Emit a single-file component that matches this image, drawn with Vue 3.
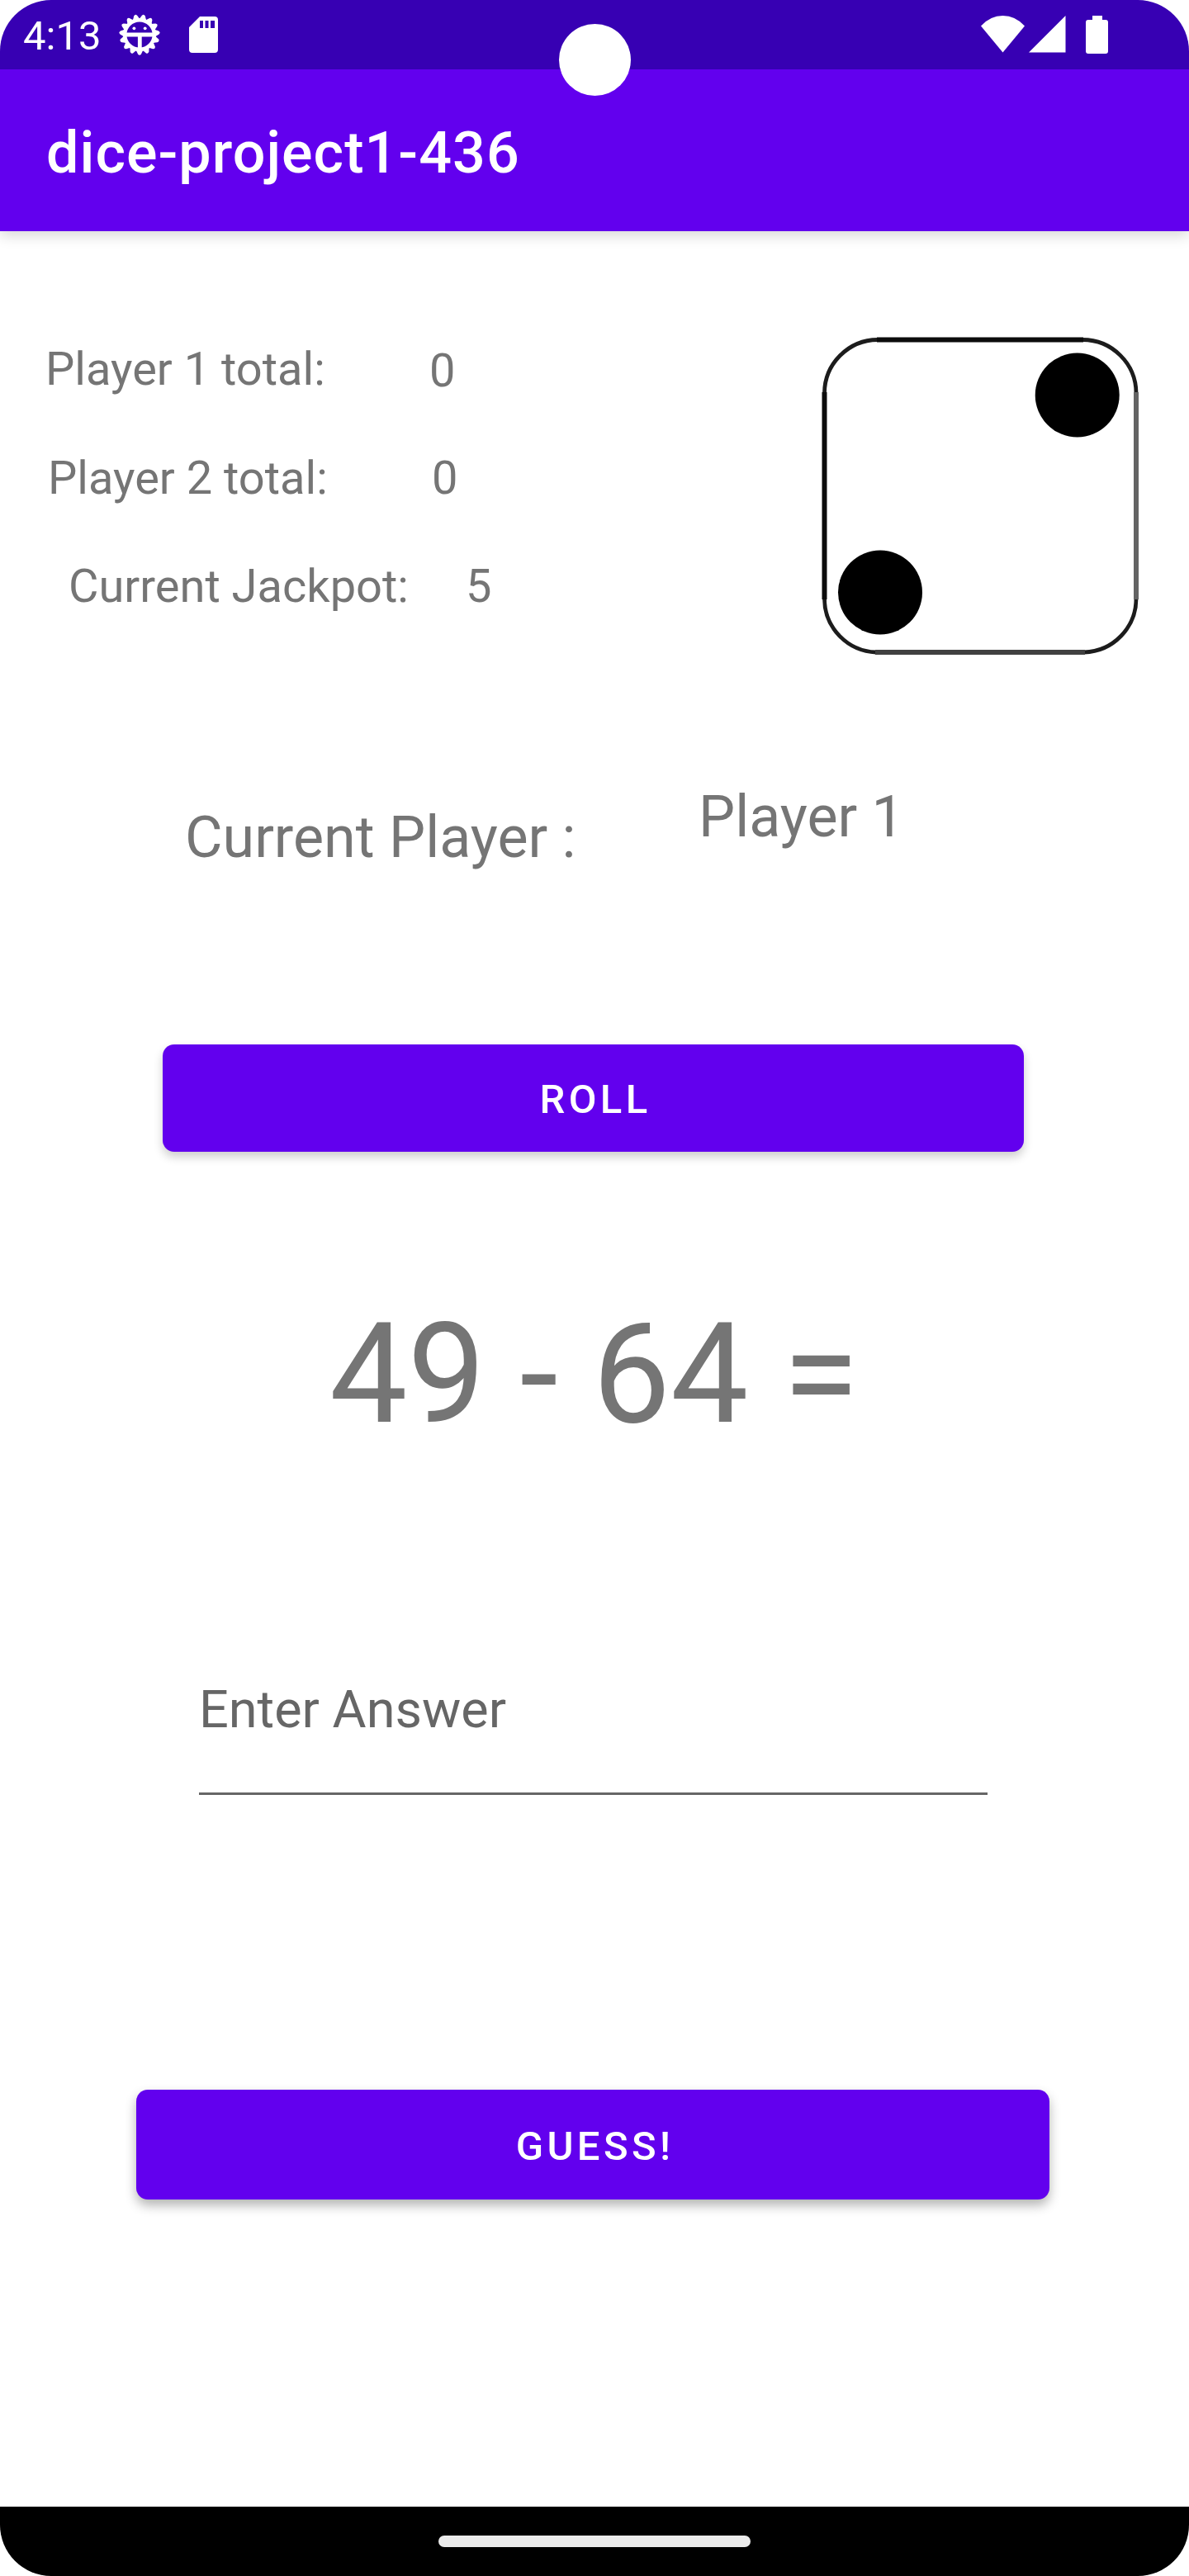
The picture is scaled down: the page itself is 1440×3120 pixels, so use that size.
<script setup>
import { ref } from 'vue'

const scores = ref([
  { id: 'p1', label: 'Player 1 total:', value: 0 },
  { id: 'p2', label: 'Player 2 total:', value: 0 },
  { id: 'jackpot', label: 'Current Jackpot:', value: 5 },
])
const currentPlayer = ref('Player 1')
const problem = ref('49 - 64 =')
const answer = ref('')

const teeth = Array.from({ length: 15 }, (_, i) => i * 24 + 12)
</script>

<template>
  <div class="phone">
    <header class="status-bar">
      <span class="clock">4:13</span>
      <svg class="debug-icon" viewBox="-25 -25 50 50">
        <g fill="#fff">
          <path
            v-for="angle in teeth"
            :key="angle"
            d="M-4.6 -18 L-2 -23.4 Q0 -26 2 -23.4 L4.6 -18 Z"
            :transform="`rotate(${angle})`"
          />
        </g>
        <circle r="17.8" fill="none" stroke="#fff" stroke-width="4.4" />
        <path d="M-17 0H17M0.3 0V17" fill="none" stroke="#fff" stroke-width="4.8" />
        <circle cx="-6.6" cy="-7.7" r="1.9" fill="#fff" />
        <circle cx="6.7" cy="-7.7" r="1.9" fill="#fff" />
      </svg>
      <svg class="sd-icon" viewBox="0 0 35 44">
        <path
          fill="#fff"
          fill-rule="evenodd"
          d="M13 0H31Q35 0 35 4V40Q35 44 31 44H4Q0 44 0 40V13ZM13 5V14H17V5ZM19.5 5V14H23.5V5ZM26 5V14H31V5Z"
        />
      </svg>
      <span class="spacer"></span>
      <svg class="wifi-icon" viewBox="0 0 53 45">
        <path fill="#fff" d="M0 12.4Q11.500 0 26.500 0T53 12.400L26.500 44.500Z" />
      </svg>
      <svg class="signal-icon" viewBox="0 0 45 45">
        <path fill="#fff" d="M0 44.500L44.500 0V44.500Z" />
      </svg>
      <svg class="battery-icon" viewBox="0 0 27 46">
        <path fill="#fff" d="M8 0H20V5H24Q27 5 27 8V43Q27 46 24 46H3Q0 46 0 43V8Q0 5 3 5H8Z" />
      </svg>
      <span class="camera"></span>
    </header>

    <div class="app-bar"><h1>dice-project1-436</h1></div>

    <main class="content">
      <section class="summary">
        <div class="scores">
          <div v-for="s in scores" :key="s.id" class="score" :class="s.id">
            <span class="label">{{ s.label }}</span>
            <span class="value">{{ s.value }}</span>
          </div>
        </div>
        <svg class="die" viewBox="0 0 384 386">
          <path d="M3.500 68A65 65 0 0 1 68 3.500M316 3.500A65 65 0 0 1 381 68M381 317A65 65 0 0 1 318 382M66 382A65 65 0 0 1 3.500 317" fill="none" stroke="#1c1c1c" stroke-width="4.800" />
          <path d="M67 3.500H317" stroke="#0c0c0c" stroke-width="6" />
          <path d="M3.500 67V318" stroke="#0c0c0c" stroke-width="6" />
          <path d="M65 382H319" stroke="#404040" stroke-width="6" />
          <path d="M381 67V318" stroke="#646464" stroke-width="6" />
          <circle cx="309.700" cy="70.500" r="51" />
          <circle cx="71" cy="309.500" r="51" />
        </svg>
      </section>

      <section class="turn">
        <span class="turn-label">Current Player :</span>
        <span class="turn-value">{{ currentPlayer }}</span>
      </section>

      <button class="btn roll">ROLL</button>
      <div class="problem">{{ problem }}</div>
      <input v-model="answer" class="answer" type="text" placeholder="Enter Answer" />
      <button class="btn guess">GUESS!</button>
    </main>

    <footer class="nav-bar"><span class="handle"></span></footer>
  </div>
</template>

<style>
body {
  margin: 0;
  background: #fff;
}
</style>

<style scoped>
.phone {
  width: 1440px;
  height: 3120px;
  display: flex;
  flex-direction: column;
  overflow: hidden;
  border-radius: 62px;
  background: #fff;
  color: #757575;
  font-family: Roboto, "Liberation Sans", sans-serif;
}
.status-bar {
  position: relative;
  z-index: 2;
  height: 84px;
  box-sizing: border-box;
  flex: none;
  display: flex;
  align-items: flex-start;
  padding: 0 98px 0 28px;
  background: #3700b3;
  color: #fff;
}
.clock {
  width: 116px;
  padding-top: 15px;
  font-size: 49px;
  line-height: 58px;
}
.debug-icon { width: 50px; height: 50px; margin-top: 17px; }
.sd-icon { width: 35px; height: 44px; margin: 20px 0 0 35px; }
.spacer { flex: 1; }
.wifi-icon { width: 53px; height: 45px; margin-top: 19px; }
.signal-icon { width: 45px; height: 45px; margin: 19px 0 0 5px; }
.battery-icon { width: 27px; height: 46px; margin: 19px 0 0 24px; }
.camera {
  position: absolute;
  left: 677px;
  top: 29px;
  width: 87px;
  height: 87px;
  border-radius: 50%;
  background: #fff;
}
.app-bar {
  position: relative;
  z-index: 1;
  height: 196px;
  flex: none;
  display: flex;
  align-items: center;
  padding-left: 56px;
  background: #6200ee;
  color: #fff;
  box-shadow: 0 5px 16px rgba(0, 0, 0, 0.16);
}
h1 {
  margin: 6px 0 0;
  font-size: 70px;
  line-height: 82px;
  font-weight: 500;
  letter-spacing: 1.05px;
}
.content {
  flex: 1;
  display: flex;
  flex-direction: column;
}
.summary {
  display: flex;
  justify-content: space-between;
  align-items: flex-start;
  padding: 128px 61px 0 55px;
}
.scores {
  display: flex;
  flex-direction: column;
  gap: 66px;
  padding-top: 6px;
}
.score {
  display: flex;
  font-size: 56px;
  line-height: 66px;
}
.label { width: 465px; white-space: nowrap; }
.p1 .value { margin: 2px 0 -2px; }
.p2 { margin-left: 3px; }
.jackpot { margin: -1px 0 0 28px; }
.jackpot .label { width: 481px; }
.die { width: 384px; height: 386px; }
.turn {
  display: flex;
  align-items: flex-start;
  padding-left: 224px;
  margin-top: 154px;
  font-size: 70px;
  line-height: 82px;
}
.turn-label { width: 622px; padding-top: 25px; }
.btn {
  border: 0;
  border-radius: 14px;
  padding: 0;
  background: #6200ee;
  color: #fff;
  font: 500 49px/58px Roboto, "Liberation Sans", sans-serif;
  letter-spacing: 4.375px;
}
.roll {
  width: 1043px;
  height: 130px;
  margin: 210px 0 0 197px;
  padding: 3px 0 0 5px;
  box-shadow: 0 6px 12px rgba(0, 0, 0, 0.2);
}
.problem {
  margin: 172px 0 0 399px;
  font-size: 168px;
  line-height: 196px;
  white-space: nowrap;
}
.answer {
  box-sizing: border-box;
  width: 955px;
  height: 174px;
  margin: 237px 0 0 241px;
  padding: 0 0 30px;
  border: 0;
  border-bottom: 3px solid #666;
  border-radius: 0;
  outline: none;
  background: transparent;
  color: #222;
  font: 63px/74px Roboto, "Liberation Sans", sans-serif;
}
.answer::placeholder { color: #666; opacity: 1; }
.guess {
  width: 1106px;
  height: 133px;
  margin: 357px 0 0 165px;
  padding: 4px 0 0 5px;
  box-shadow: 0 7px 14px rgba(0, 0, 0, 0.3);
}
.nav-bar {
  height: 84px;
  flex: none;
  display: flex;
  justify-content: center;
  align-items: flex-start;
  background: #000;
}
.handle {
  width: 378px;
  height: 14px;
  margin-top: 35px;
  border-radius: 7px;
  background: #ebebeb;
}
</style>
